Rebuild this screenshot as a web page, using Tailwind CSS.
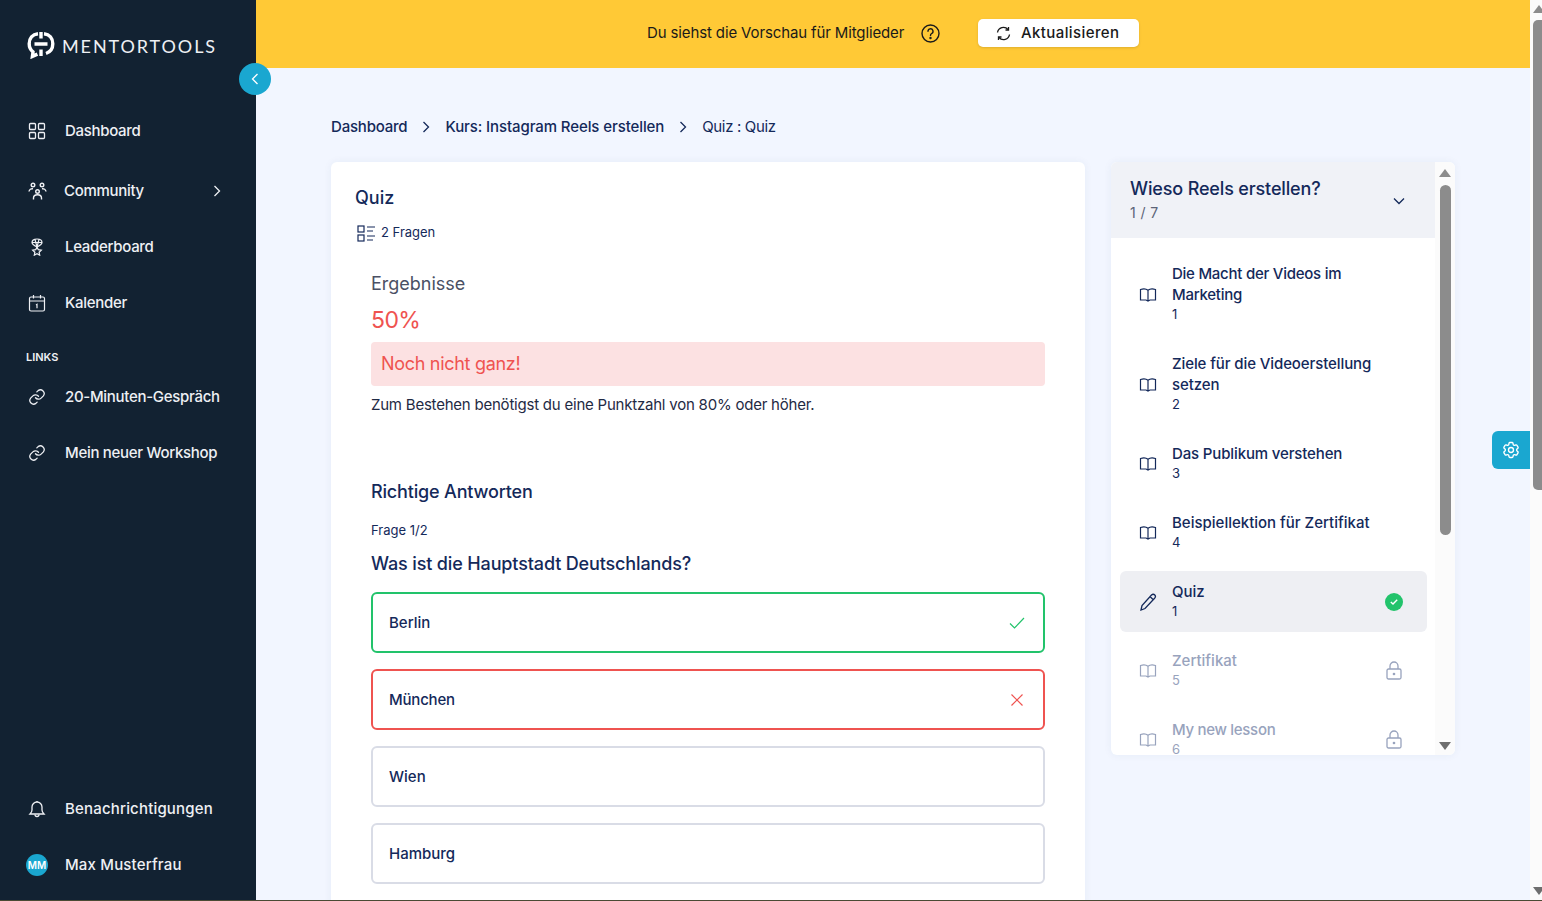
<!DOCTYPE html>
<html lang="de">
<head>
  <meta charset="UTF-8" />
  <meta name="viewport" content="width=device-width, initial-scale=1.0"/>
  <title>Quiz - Mentortools</title>
  <script src="https://cdn.jsdelivr.net/npm/@tailwindcss/browser@4"></script>
</head>
<body class="h-[901px] overflow-hidden bg-[#f2f6ff] font-['Inter',sans-serif] text-[#14295a]">
<div class="flex h-[900px]">

  <!-- Sidebar -->
  <aside class="w-[256px] shrink-0 bg-[#122232] text-[#eef0f4] flex flex-col">
    <div class="h-[88px] pl-[27px] pt-[31px] flex items-start gap-[7px]">
      <svg class="w-[28px] h-[28px]" viewBox="0 0 28 28" fill="none" stroke="#fff" stroke-width="3.400">
        <path d="M11 2.700C5.500 3.300 2.200 7.300 2.200 12.800c0 3.400 1.400 6.200 3.800 8.100l-.6 4.500 5-2.300"/>
        <path d="M17 2.700c5.500.6 8.800 4.600 8.800 10.100 0 4.900-2.700 8.300-6.800 9.700"/>
        <path d="M14 1v6.500M7.500 13h13M14 18.500V25"/>
      </svg>
      <span class="font-['Lato',sans-serif] text-[18px] leading-[30px] tracking-[1.9px]">MENTORTOOLS</span>
    </div>

    <nav class="text-[15px] font-medium tracking-[-0.3px]">
      <a class="h-[56px] mt-[15px] pl-[28px] flex items-center gap-[19px]">
        <svg class="w-[18px] h-[18px]" viewBox="0 0 18 18" fill="none" stroke="currentColor" stroke-width="1.300"><rect x="1.500" y="1.500" width="6" height="6" rx="1"/><rect x="10.500" y="1.500" width="6" height="6" rx="1"/><rect x="1.500" y="10.500" width="6" height="6" rx="1"/><rect x="10.500" y="10.500" width="6" height="6" rx="1"/></svg>
        <span>Dashboard</span>
      </a>
      <a class="h-[56px] mt-[4px] pl-[28px] pr-[35px] flex items-center">
        <svg class="w-[19px] h-[19px] mr-[17px]" viewBox="0 0 19 19" fill="none" stroke="currentColor" stroke-width="1.400"><circle cx="5" cy="3" r="1.800"/><circle cx="14" cy="3" r="1.800"/><circle cx="9.500" cy="9.500" r="1.800"/><path d="M1 9.500c.3-2 2-3 4-2.700M18 9.500c-.3-2-2-3-4-2.700M5.500 17.500v-1.500c0-2 1.800-3.300 4-3.300s4 1.300 4 3.300v1.500"/></svg>
        <span>Community</span>
        <svg class="ml-auto w-[8px] h-[12px]" viewBox="0 0 8 12" fill="none" stroke="currentColor" stroke-width="1.300"><path d="M1.500 1l5 5-5 5"/></svg>
      </a>
      <a class="h-[56px] pl-[28px] flex items-center gap-[19px]">
        <svg class="w-[18px] h-[18px]" viewBox="0 0 18 18" fill="none" stroke="currentColor" stroke-width="1.200"><path d="M9 1c3 0 5 1.500 5 3.500 0 1.500-3 3.500-5 4.500-2-1-5-3-5-4.500C4 2.500 6 1 9 1zM7 1.500L9 9l2-7.500M4 4.500h10"/><path d="M9 9l1.300 2.700 3 .4-2.200 2.100.6 3L9 15.800l-2.700 1.400.6-3-2.200-2.100 3-.4z"/></svg>
        <span>Leaderboard</span>
      </a>
      <a class="h-[56px] pl-[28px] flex items-center gap-[19px]">
        <svg class="w-[18px] h-[18px]" viewBox="0 0 18 18" fill="none" stroke="currentColor" stroke-width="1.200"><rect x="1.500" y="3" width="15" height="14" rx="1.500"/><path d="M1.500 7h15M5.500 1v3.500M12.500 1v3.500M8 11l1-.7v4" /></svg>
        <span>Kalender</span>
      </a>
      <div class="mt-[19px] pl-[26px] h-[14px] text-[11px] leading-[14px] font-semibold tracking-normal">LINKS</div>
      <a class="h-[56px] mt-[5px] pl-[28px] flex items-center gap-[19px]">
        <svg class="w-[18px] h-[18px]" viewBox="0 0 24 24" fill="none" stroke="currentColor" stroke-width="1.700" stroke-linecap="round"><path d="M10 13a5 5 0 0 0 7.500.5l3-3a5 5 0 0 0-7-7l-1.700 1.700"/><path d="M14 11a5 5 0 0 0-7.500-.5l-3 3a5 5 0 0 0 7 7l1.700-1.700"/></svg>
        <span>20-Minuten-Gespräch</span>
      </a>
      <a class="h-[56px] pl-[28px] flex items-center gap-[19px]">
        <svg class="w-[18px] h-[18px]" viewBox="0 0 24 24" fill="none" stroke="currentColor" stroke-width="1.700" stroke-linecap="round"><path d="M10 13a5 5 0 0 0 7.500.5l3-3a5 5 0 0 0-7-7l-1.700 1.700"/><path d="M14 11a5 5 0 0 0-7.500-.5l-3 3a5 5 0 0 0 7 7l1.700-1.700"/></svg>
        <span>Mein neuer Workshop</span>
      </a>
    </nav>

    <div class="mt-auto mb-[7px] text-[15px] font-medium tracking-[0.18px]">
      <a class="h-[56px] pl-[28px] flex items-center gap-[19px]">
        <svg class="w-[18px] h-[18px]" viewBox="0 0 18 18" fill="none" stroke="currentColor" stroke-width="1.300"><path d="M2 14c1.200-1.200 2-2.200 2-4V7a5 5 0 0 1 10 0v3c0 1.800.8 2.800 2 4z"/><path d="M7 14.500a2 2 0 0 0 4 0M9 1v1"/></svg>
        <span>Benachrichtigungen</span>
      </a>
      <a class="h-[56px] pl-[26px] flex items-center gap-[17px]">
        <span class="w-[22px] h-[22px] rounded-full bg-[#1aa7d0] text-white text-[10px] font-semibold tracking-normal flex items-center justify-center">MM</span>
        <span>Max Musterfrau</span>
      </a>
    </div>
  </aside>

  <!-- Main column -->
  <div class="relative w-[1274px] shrink-0 flex flex-col">
    <div class="h-[68px] pb-[2px] bg-[#ffc936] flex items-center text-[#1a1a1a]">
      <span class="ml-[391px] text-[15px] tracking-[-0.13px]">Du siehst die Vorschau für Mitglieder</span>
      <svg class="ml-[17px] w-[19px] h-[19px]" viewBox="0 0 19 19" fill="none" stroke="currentColor" stroke-width="1.400"><circle cx="9.500" cy="9.500" r="8.500"/><path d="M7 7.300a2.500 2.500 0 1 1 3.700 2.200c-.8.500-1.200 1-1.200 1.900" stroke-linecap="round"/><circle cx="9.500" cy="14" r=".5" fill="currentColor"/></svg>
      <button class="ml-[38px] w-[161px] h-[28px] pr-[2px] bg-white rounded-[5px] shadow-sm flex items-center justify-center gap-[10px] text-[15px] font-medium tracking-[0.4px]">
        <svg class="w-[15px] h-[15px]" viewBox="0 0 15 15" fill="none" stroke="currentColor" stroke-width="1.300"><path d="M1.500 6.500A6 6 0 0 1 12 3.500M13.500 8.500A6 6 0 0 1 3 11.500"/><path d="M12.500 1v3h-3M2.500 14v-3h3"/></svg>
        <span>Aktualisieren</span>
      </button>
    </div>

    <!-- Sidebar toggle -->
    <button class="absolute left-[-17px] top-[63px] w-[32px] h-[32px] rounded-full bg-[#1aa7d0] flex items-center justify-center">
      <svg class="w-[8px] h-[12px]" viewBox="0 0 8 12" fill="none" stroke="#fff" stroke-width="1.300"><path d="M6.500 1l-5 5 5 5"/></svg>
    </button>

    <main class="pl-[75px] flex-1 overflow-hidden">
      <div class="h-[94px] pt-[49px] flex items-start text-[15px] leading-[20px]">
        <span class="font-medium tracking-[-0.2px]">Dashboard</span>
        <svg class="mx-[15px] mt-[4px] w-[8px] h-[12px]" viewBox="0 0 8 12" fill="none" stroke="currentColor" stroke-width="1.300"><path d="M1.500 1l5 5-5 5"/></svg>
        <span class="font-medium tracking-[-0.1px]">Kurs: Instagram Reels erstellen</span>
        <svg class="mx-[15px] mt-[4px] w-[8px] h-[12px]" viewBox="0 0 8 12" fill="none" stroke="currentColor" stroke-width="1.300"><path d="M1.500 1l5 5-5 5"/></svg>
        <span class="tracking-[-0.35px]">Quiz : Quiz</span>
      </div>

      <div class="flex items-start">
        <!-- Quiz card -->
        <section class="w-[754px] h-[760px] bg-white rounded-[6px] shadow-[0_0_8px_rgba(40,60,120,0.06)] px-[24px] pt-[24px]">
          <h1 class="text-[18px] leading-[24px] font-medium">Quiz</h1>
          <div class="mt-[13px] h-[20px] flex items-center gap-[5px] text-[13px]">
            <svg class="ml-[2px] w-[19px] h-[17px]" viewBox="0 0 19 17" fill="none" stroke="currentColor" stroke-width="1.200"><rect x="1" y="1" width="6" height="6"/><rect x="1" y="10" width="6" height="6"/><path d="M10 2h8M10 6h6M10 11h8M10 15h6"/></svg>
            <span>2 Fragen</span>
          </div>
          <div class="px-[16px]">
            <h2 class="mt-[29px] text-[18px] leading-[24px] text-[#4a5064]">Ergebnisse</h2>
            <div class="mt-[8px] text-[23px] leading-[32px] tracking-[-0.6px] text-[#ef5350]">50%</div>
            <div class="mt-[6px] h-[44px] pb-[2px] rounded-[4px] bg-[#fce1e2] px-[10px] flex items-center text-[18px] tracking-[-0.3px] text-[#ef5350]">Noch nicht ganz!</div>
            <p class="mt-[9px] text-[15px] leading-[20px] tracking-[-0.22px] text-[#1f2a44]">Zum Bestehen benötigst du eine Punktzahl von 80% oder höher.</p>
            <h2 class="mt-[65px] text-[18px] leading-[24px] font-medium tracking-[-0.17px]">Richtige Antworten</h2>
            <p class="mt-[17px] text-[13px] leading-[18px]">Frage 1/2</p>
            <h3 class="mt-[13px] text-[18px] leading-[24px] font-medium tracking-[-0.14px]">Was ist die Hauptstadt Deutschlands?</h3>
            <div class="mt-[16px] flex flex-col gap-[16px] text-[15px] font-medium">
              <div class="h-[61px] border-2 border-[#22c36b] rounded-[6px] pl-[16px] pr-[18px] flex items-center justify-between">
                <span class="mt-[2px]">Berlin</span>
                <svg class="w-[16px] h-[12px]" viewBox="0 0 16 12" fill="none" stroke="#22c36b" stroke-width="1.200"><path d="M1 6.500l4.500 4.500L15 1"/></svg>
              </div>
              <div class="h-[61px] border-2 border-[#ef5350] rounded-[6px] pl-[16px] pr-[20px] flex items-center justify-between">
                <span class="mt-[2px] tracking-[-0.2px]">München</span>
                <svg class="w-[12px] h-[12px]" viewBox="0 0 12 12" fill="none" stroke="#ef5350" stroke-width="1.200"><path d="M.5.500l11 11M11.500.500l-11 11"/></svg>
              </div>
              <div class="h-[61px] border-2 border-[#d9dce6] rounded-[6px] pl-[16px] flex items-center"><span class="mt-[2px]">Wien</span></div>
              <div class="h-[61px] border-2 border-[#d9dce6] rounded-[6px] pl-[16px] flex items-center"><span class="mt-[2px]">Hamburg</span></div>
            </div>
          </div>
        </section>

        <!-- Lesson list -->
        <section class="ml-[26px] w-[344px] h-[593px] bg-white rounded-[6px] shadow-[0_0_8px_rgba(40,60,120,0.06)] flex overflow-hidden">
          <div class="w-[324px] shrink-0 overflow-hidden">
            <div class="h-[76px] bg-[#f0f2f7] pl-[19px] pr-[30px] flex items-center justify-between">
              <div>
                <div class="text-[18px] leading-[24px] font-medium tracking-[-0.15px]">Wieso Reels erstellen?</div>
                <div class="mt-[2px] text-[14px] leading-[20px] text-[#5b6478] tracking-[0.4px]">1 / 7</div>
              </div>
              <svg class="mt-[2px] w-[12px] h-[8px]" viewBox="0 0 12 8" fill="none" stroke="currentColor" stroke-width="1.300"><path d="M1 1.500l5 5 5-5"/></svg>
            </div>
            <ul class="pt-[15px] pl-[9px] pr-[8px] flex flex-col gap-[8px] text-[15px] leading-[21px]">
              <li class="pt-[10px] pb-[12px] pl-[19px] flex items-center">
                <svg class="mt-[2px] w-[18px] h-[15px] shrink-0" viewBox="0 0 18 15" fill="none" stroke="currentColor" stroke-width="1.200"><path d="M1.500 2.500c2.800-.9 5.700-.7 7.500.8 1.800-1.500 4.700-1.700 7.500-.8V13H11l-2 1-2-1H1.500zM9 3.300V14"/></svg>
                <div class="ml-[15px]"><div class="font-medium tracking-[-0.25px]">Die Macht der Videos im<br>Marketing</div><div class="text-[13px] leading-[18px]">1</div></div>
              </li>
              <li class="pt-[10px] pb-[12px] pl-[19px] flex items-center">
                <svg class="mt-[2px] w-[18px] h-[15px] shrink-0" viewBox="0 0 18 15" fill="none" stroke="currentColor" stroke-width="1.200"><path d="M1.500 2.500c2.800-.9 5.700-.7 7.500.8 1.800-1.500 4.700-1.700 7.500-.8V13H11l-2 1-2-1H1.500zM9 3.300V14"/></svg>
                <div class="ml-[15px]"><div class="font-medium tracking-[-0.1px]">Ziele für die Videoerstellung<br>setzen</div><div class="text-[13px] leading-[18px]">2</div></div>
              </li>
              <li class="pt-[10px] pb-[12px] pl-[19px] flex items-center">
                <svg class="mt-[2px] w-[18px] h-[15px] shrink-0" viewBox="0 0 18 15" fill="none" stroke="currentColor" stroke-width="1.200"><path d="M1.500 2.500c2.800-.9 5.700-.7 7.500.8 1.800-1.500 4.700-1.700 7.500-.8V13H11l-2 1-2-1H1.500zM9 3.300V14"/></svg>
                <div class="ml-[15px]"><div class="font-medium tracking-[-0.14px]">Das Publikum verstehen</div><div class="text-[13px] leading-[18px]">3</div></div>
              </li>
              <li class="pt-[10px] pb-[12px] pl-[19px] flex items-center">
                <svg class="mt-[2px] w-[18px] h-[15px] shrink-0" viewBox="0 0 18 15" fill="none" stroke="currentColor" stroke-width="1.200"><path d="M1.500 2.500c2.800-.9 5.700-.7 7.500.8 1.800-1.500 4.700-1.700 7.500-.8V13H11l-2 1-2-1H1.500zM9 3.300V14"/></svg>
                <div class="ml-[15px]"><div class="font-medium">Beispiellektion für Zertifikat</div><div class="text-[13px] leading-[18px]">4</div></div>
              </li>
              <li class="pt-[10px] pb-[12px] pl-[18px] pr-[24px] flex items-center bg-[#eeeff3] rounded-[6px]">
                <svg class="mt-[2px] w-[20px] h-[18px] shrink-0" viewBox="0 0 20 18" fill="none" stroke="currentColor" stroke-width="1.300"><path d="M3 17l1-4.500L13.500 2c1-1 2.400-1 3.300 0 .8.900.8 2.200-.2 3.200L7 15.500zM12 3.500l3.500 3.500"/></svg>
                <div class="ml-[14px]"><div class="font-medium">Quiz</div><div class="text-[13px] leading-[18px]">1</div></div>
                <span class="mt-[2px] ml-auto w-[18px] h-[18px] rounded-full bg-[#22c36b] flex items-center justify-center">
                  <svg class="w-[8px] h-[6px]" viewBox="0 0 8 6" fill="none" stroke="#fff" stroke-width="1.400"><path d="M.8 3l2.200 2L7.200.8"/></svg>
                </span>
              </li>
              <li class="pt-[10px] pb-[12px] pl-[19px] pr-[25px] flex items-center text-[#98a3bd]">
                <svg class="mt-[2px] w-[18px] h-[15px] shrink-0" viewBox="0 0 18 15" fill="none" stroke="currentColor" stroke-width="1.200"><path d="M1.500 2.500c2.800-.9 5.700-.7 7.500.8 1.800-1.500 4.700-1.700 7.500-.8V13H11l-2 1-2-1H1.500zM9 3.300V14"/></svg>
                <div class="ml-[15px]"><div class="font-medium">Zertifikat</div><div class="text-[13px] leading-[18px]">5</div></div>
                <svg class="mt-[2px] ml-auto w-[16px] h-[19px]" viewBox="0 0 16 19" fill="none" stroke="currentColor" stroke-width="1.300"><rect x="1" y="8" width="14" height="10" rx="1.500"/><path d="M4 8V5a4 4 0 0 1 8 0v3"/><circle cx="8" cy="13" r=".7" fill="currentColor"/></svg>
              </li>
              <li class="pt-[10px] pb-[12px] pl-[19px] pr-[25px] flex items-center text-[#98a3bd]">
                <svg class="mt-[2px] w-[18px] h-[15px] shrink-0" viewBox="0 0 18 15" fill="none" stroke="currentColor" stroke-width="1.200"><path d="M1.500 2.500c2.800-.9 5.700-.7 7.500.8 1.800-1.500 4.700-1.700 7.500-.8V13H11l-2 1-2-1H1.500zM9 3.300V14"/></svg>
                <div class="ml-[15px]"><div class="font-medium tracking-[-0.3px]">My new lesson</div><div class="text-[13px] leading-[18px]">6</div></div>
                <svg class="mt-[2px] ml-auto w-[16px] h-[19px]" viewBox="0 0 16 19" fill="none" stroke="currentColor" stroke-width="1.300"><rect x="1" y="8" width="14" height="10" rx="1.500"/><path d="M4 8V5a4 4 0 0 1 8 0v3"/><circle cx="8" cy="13" r=".7" fill="currentColor"/></svg>
              </li>
            </ul>
          </div>
          <!-- list scrollbar -->
          <div class="flex-1 bg-[#fbfbfb] flex flex-col items-center pt-[7px] pb-[5px]">
            <svg class="w-[12px] h-[8px] shrink-0" viewBox="0 0 12 8" fill="#8c8c8c"><path d="M6 0l6 8H0z"/></svg>
            <div class="mt-[8px] w-[11px] h-[350px] rounded-full bg-[#8c8c8c]"></div>
            <svg class="mt-auto w-[12px] h-[8px] shrink-0" viewBox="0 0 12 8" fill="#6e6e6e"><path d="M6 8L0 0h12z"/></svg>
          </div>
        </section>
      </div>
    </main>

    <!-- Settings tab -->
    <button class="absolute right-0 top-[431px] w-[38px] h-[38px] rounded-l-[6px] bg-[#1aa7d0] flex items-center justify-center">
      <svg class="w-[20px] h-[20px]" viewBox="0 0 24 24" fill="none" stroke="#fff" stroke-width="1.600"><path d="M9.594 3.94c.09-.542.56-.94 1.110-.94h2.593c.55 0 1.020.398 1.110.94l.213 1.281c.063.374.313.686.645.870.074.040.147.083.22.127.325.196.72.257 1.075.124l1.217-.456a1.125 1.125 0 0 1 1.370.49l1.296 2.247a1.125 1.125 0 0 1-.26 1.431l-1.003.827c-.293.241-.438.613-.43.992a7.723 7.723 0 0 1 0 .255c-.008.378.137.75.43.991l1.004.827c.424.35.534.955.26 1.430l-1.298 2.247a1.125 1.125 0 0 1-1.369.491l-1.217-.456c-.355-.133-.75-.072-1.076.124a6.470 6.470 0 0 1-.22.128c-.331.183-.581.495-.644.869l-.213 1.281c-.09.543-.56.94-1.110.94h-2.594c-.55 0-1.019-.398-1.110-.94l-.213-1.281c-.062-.374-.312-.686-.644-.87a6.520 6.520 0 0 1-.22-.127c-.325-.196-.72-.257-1.076-.124l-1.217.456a1.125 1.125 0 0 1-1.369-.49l-1.297-2.247a1.125 1.125 0 0 1 .26-1.431l1.004-.827c.292-.24.437-.613.43-.991a6.932 6.932 0 0 1 0-.255c.007-.38-.138-.751-.43-.992l-1.004-.827a1.125 1.125 0 0 1-.26-1.430l1.297-2.247a1.125 1.125 0 0 1 1.370-.491l1.216.456c.356.133.751.072 1.076-.124.072-.044.146-.086.22-.128.332-.183.582-.495.644-.869l.214-1.280z"/><circle cx="12" cy="12" r="3"/></svg>
    </button>
  </div>

  <!-- Page scrollbar -->
  <div class="flex-1 bg-[#fbfbfb] flex flex-col items-end">
    <svg class="mt-[5px] w-[9px] h-[8px] shrink-0" viewBox="0 0 9 8" fill="#8c8c8c"><path d="M6 0l6 8H0z"/></svg>
    <div class="mt-[7px] w-[9px] h-[470px] rounded-tl-[5px] rounded-bl-[5px] bg-[#8c8c8c]"></div>
    <svg class="mt-auto mb-[5px] w-[9px] h-[8px] shrink-0" viewBox="0 0 9 8" fill="#6e6e6e"><path d="M6 8L0 0h12z"/></svg>
  </div>
</div>
<div class="h-[1px] bg-[#4a4a34]"></div>
</body>
</html>
